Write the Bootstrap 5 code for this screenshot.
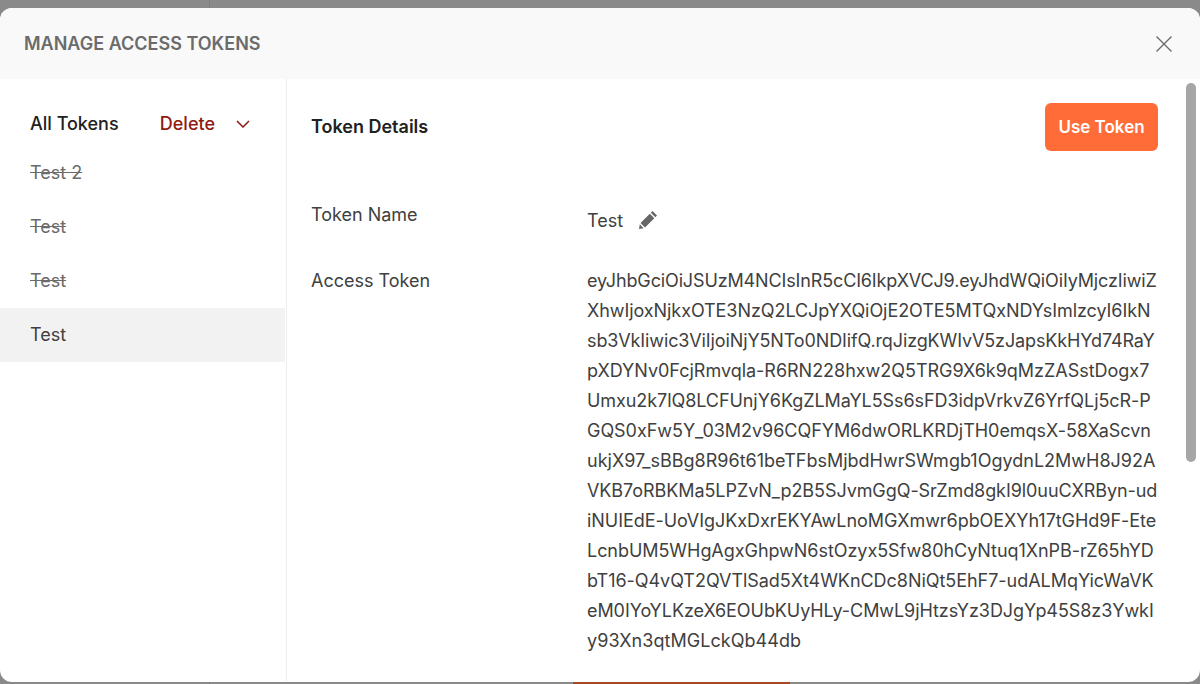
<!DOCTYPE html>
<html lang="en"><head><meta charset="utf-8">
<link href="https://cdn.jsdelivr.net/npm/bootstrap@5.3.0/dist/css/bootstrap.min.css" rel="stylesheet">
<style>
html,body{height:684px;overflow:hidden;background:#8a8a8a;font-family:Inter,"Liberation Sans",sans-serif;color:#212121}
.shell{height:674px;margin:8px 0 0;background:#fff;border-radius:12px;overflow:hidden;position:relative}
.top-strip{height:71px;background:#f9f9f9;padding:0 28px 0 24px}
.top-strip h1{font-size:18px;font-weight:600;color:#6b6b6b;margin:0}
.side{width:287px;flex:none;border-right:1px solid #ededed}
.side-head{height:67px;padding:31px 36px 0 30px;align-items:flex-start}
.side-head strong{font-size:18px;line-height:27px;font-weight:500}
.del{font-size:18px;line-height:27px;font-weight:500;color:#8e1a10;padding:0;border:0;background:none}
.del-wrap{gap:21px}
.tok{height:54px;padding:0 30px 2px;font-size:18px;color:#404040;display:flex;align-items:center}
.tok s{color:#6b6b6b}
.tok.on{background:#f2f2f2;width:285px}
.main{padding:24px 42px 0 24px;min-width:0;flex:1}
.main h2{font-size:18px;font-weight:600;margin:0}
.use{background:#ff6c37;color:#fff;font-size:17px;font-weight:600;border:0;border-radius:6px;width:113px;height:48px;padding:2px 0 0}
.lbl{width:276px;flex:none;font-size:18px;color:#404040;line-height:27px}
.name-row{margin-top:50px}
.tok-row{margin-top:33px}
.val{font-size:18px;color:#404040;line-height:27px;margin-top:6px;gap:15px}
.val svg{margin-bottom:2px}
.jwt{width:572px;line-height:30px;font-size:18px;color:#404040;white-space:nowrap;margin-top:-1px}
.jwt span{display:block}
.jwt span:nth-child(1){letter-spacing:-.14px}
.jwt span:nth-child(2){letter-spacing:-.07px}
.jwt span:nth-child(3){letter-spacing:-.12px}
.jwt span:nth-child(4){letter-spacing:-.02px}
.jwt span:nth-child(5){letter-spacing:-.07px}
.jwt span:nth-child(6){letter-spacing:-.04px}
.jwt span:nth-child(8){letter-spacing:-.07px}
.jwt span:nth-child(9){letter-spacing:-.05px}
.jwt span:nth-child(10){letter-spacing:-.05px}
.jwt span:nth-child(11){letter-spacing:-.04px}
.jwt span:nth-child(12){letter-spacing:-.07px}
.jwt span:nth-child(13){letter-spacing:.05px}
.sb{position:absolute;right:4px;top:75px;width:10px;height:379px;background:#a6a6a6;border-radius:5px}
.under{position:absolute;left:573px;top:682px;width:217px;height:2px;background:#a8481f}
.seam{position:absolute;left:209px;top:0;width:1px;height:684px;background:#7e7e7e}
</style></head><body>
<div class="seam"></div>
<div class="under"></div>
<div class="shell">
<div class="top-strip d-flex align-items-center justify-content-between">
<h1>MANAGE ACCESS TOKENS</h1>
<button class="btn p-0 border-0 d-flex" aria-label="Close"><svg width="16" height="16" viewBox="0 0 16 16" fill="none" stroke="#6b6b6b" stroke-width="1.4"><path d="M.5.5l15 15M15.500.5l-15 15"/></svg></button>
</div>
<div class="d-flex" style="height:603px">
<div class="side">
<div class="side-head d-flex justify-content-between"><strong>All Tokens</strong><span class="d-flex align-items-center del-wrap"><button class="del">Delete</button><svg width="14" height="8" viewBox="0 0 14 8" fill="none" stroke="#8e1a10" stroke-width="1.5"><path d="M1 1l6 6 6-6"/></svg></span></div>
<div class="tok"><s>Test 2</s></div>
<div class="tok"><s>Test</s></div>
<div class="tok"><s>Test</s></div>
<div class="tok on">Test</div>
</div>
<div class="main">
<div class="d-flex align-items-center justify-content-between"><h2>Token Details</h2><button class="use">Use Token</button></div>
<div class="d-flex name-row"><div class="lbl">Token Name</div><div class="val d-flex align-items-center">Test <svg width="20" height="20" viewBox="0 0 20 20" fill="#666"><path d="M14.500 1l4.500 4.500-1.700 1.700-4.500-4.500zM11.800 3.700l4.500 4.500L7 17.500 2.500 13zM1.800 14.300l3.900 3.900L1 19z"/></svg></div></div>
<div class="d-flex tok-row"><div class="lbl">Access Token</div><div class="jwt"><span>eyJhbGciOiJSUzM4NCIsInR5cCI6IkpXVCJ9.eyJhdWQiOiIyMjczIiwiZ</span><span>XhwIjoxNjkxOTE3NzQ2LCJpYXQiOjE2OTE5MTQxNDYsImlzcyI6IkN</span><span>sb3VkIiwic3ViIjoiNjY5NTo0NDIifQ.rqJizgKWIvV5zJapsKkHYd74RaY</span><span>pXDYNv0FcjRmvqla-R6RN228hxw2Q5TRG9X6k9qMzZASstDogx7</span><span>Umxu2k7lQ8LCFUnjY6KgZLMaYL5Ss6sFD3idpVrkvZ6YrfQLj5cR-P</span><span>GQS0xFw5Y_03M2v96CQFYM6dwORLKRDjTH0emqsX-58XaScvn</span><span>ukjX97_sBBg8R96t61beTFbsMjbdHwrSWmgb1OgydnL2MwH8J92A</span><span>VKB7oRBKMa5LPZvN_p2B5SJvmGgQ-SrZmd8gkI9l0uuCXRByn-ud</span><span>iNUIEdE-UoVIgJKxDxrEKYAwLnoMGXmwr6pbOEXYh17tGHd9F-Ete</span><span>LcnbUM5WHgAgxGhpwN6stOzyx5Sfw80hCyNtuq1XnPB-rZ65hYD</span><span>bT16-Q4vQT2QVTlSad5Xt4WKnCDc8NiQt5EhF7-udALMqYicWaVK</span><span>eM0IYoYLKzeX6EOUbKUyHLy-CMwL9jHtzsYz3DJgYp45S8z3YwkI</span><span>y93Xn3qtMGLckQb44db</span></div></div>
</div>
</div>
<div class="sb"></div>
</div>
</body></html>
